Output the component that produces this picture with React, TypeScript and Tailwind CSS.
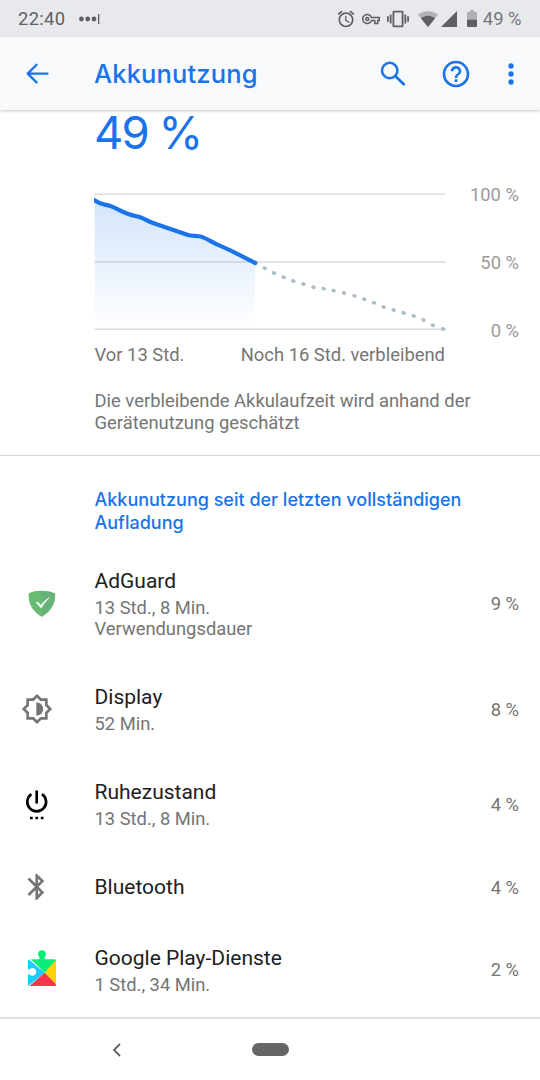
import type { ReactNode } from "react";

const FORECAST: [number, number][] = [
  [264.7, 268.2], [274, 273], [283.7, 277.2], [293.3, 281], [303.5, 284], [313.5, 287.2],
  [323.7, 288.6], [333.7, 290.6], [344, 293], [354.4, 295.9], [364.3, 299.3], [374, 302.9],
  [383.7, 307], [393.7, 310], [403.7, 313], [413.7, 316], [423.5, 320], [432.8, 325.2], [443.2, 329],
];

const CURVE =
  "M94 200 C98 203 101 204 105 204.6 C113 205.5 118 210.5 129 214.3 C134 216 137 216 141 217.5 C145 219 147 221 153 223 L188 235 C191 236 196 235.6 199 236.3 C206 237.5 211 242 218 244.9 C228 248.8 238 254.3 255.3 263";

function StatusBar() {
  return (
    <div className="flex h-[37px] shrink-0 items-center bg-[#e8e9ed] pl-[18px] pr-[18.5px] text-[#5f6063]">
      <span className="w-[61px] text-[18.4px] leading-[37px] tracking-[0.3px]">22:40</span>
      <svg className="h-[12px] w-[22px]" viewBox="0 0 22 12" fill="currentColor">
        <circle cx="2.4" cy="6" r="2.4" />
        <circle cx="8.7" cy="6" r="2.4" />
        <circle cx="15" cy="6" r="2.4" />
        <rect x="19" y="1" width="1.3" height="10" />
      </svg>
      <div className="flex flex-1 items-center justify-end">
        <svg className="mr-[6px] h-[20px] w-[20px]" viewBox="0 0 24 24" fill="currentColor">
          <path d="M22 5.72l-4.6-3.86-1.29 1.53 4.6 3.86L22 5.72zM7.88 3.39L6.6 1.86 2 5.71l1.29 1.53 4.59-3.85zM12.5 8H11v6l4.75 2.85.75-1.23-4-2.37V8zM12 4c-4.97 0-9 4.03-9 9s4.02 9 9 9c4.97 0 9-4.03 9-9s-4.03-9-9-9zm0 16c-3.87 0-7-3.13-7-7s3.13-7 7-7 7 3.13 7 7-3.13 7-7 7z" />
        </svg>
        <svg className="mr-[7px] h-[18px] w-[18px]" viewBox="0 0 24 24" fill="currentColor">
          <path d="M22 19h-6v-4h-2.68c-1.14 2.42-3.6 4-6.32 4-3.86 0-7-3.14-7-7s3.14-7 7-7c2.72 0 5.17 1.58 6.32 4H24v6h-2v4zm-4-2h2v-4h2v-2H11.94l-.23-.67C11.01 8.34 9.11 7 7 7c-2.76 0-5 2.24-5 5s2.24 5 5 5c2.11 0 4.01-1.34 4.71-3.33l.23-.67H18v4zM7 15c-1.65 0-3-1.35-3-3s1.35-3 3-3 3 1.35 3 3-1.35 3-3 3zm0-4c-.55 0-1 .45-1 1s.45 1 1 1 1-.45 1-1-.45-1-1-1z" />
        </svg>
        <svg className="mr-[9px] h-[22px] w-[22px]" viewBox="0 0 24 24" fill="currentColor">
          <path d="M0 15h2V9H0v6zm3 2h2V7H3v10zm19-8v6h2V9h-2zm-3 8h2V7h-2v10zM16.5 3h-9C6.67 3 6 3.67 6 4.5v15c0 .83.67 1.5 1.5 1.5h9c.83 0 1.5-.67 1.5-1.5v-15c0-.83-.67-1.5-1.5-1.5zM16 19H8V5h8v14z" />
        </svg>
        <svg className="mr-[3px] h-[16px] w-[20px]" viewBox="0 0 20 16">
          <path d="M0 3.7C5.5-1 14.5-1 20 3.7L10 16Z" fill="#b0b1b4" />
          <path d="M2.9 7.2c4-3.4 10.2-3.4 14.2 0L10 16Z" fill="#5f6063" />
        </svg>
        <svg className="mr-[10px] h-[16px] w-[16px]" viewBox="0 0 16 16" fill="currentColor">
          <path d="M16 0V16H0Z" />
        </svg>
        <svg className="mr-[6px] h-[17px] w-[10px]" viewBox="0 0 10 17">
          <path d="M0 2.8q0-.8.8-.8H3V0h4v2h2.2q.8 0 .8.8V9.500H0Z" fill="#b0b1b4" />
          <path d="M0 9.500h10v6.700q0 .8-.8.8H.8q-.8 0-.8-.8Z" fill="#5f6063" />
        </svg>
        <span className="text-[18.4px] leading-[37px] text-[#757679]">49 %</span>
      </div>
    </div>
  );
}

function AppBar() {
  return (
    <header className="z-10 flex h-[73px] shrink-0 items-center bg-[#f8f9fb] pl-[21px] text-[#1a73e8] shadow-[0_1px_3px_rgba(0,0,0,0.22)]">
      <svg className="h-[32px] w-[32px]" viewBox="0 0 32 32" fill="none" stroke="currentColor" strokeWidth="2.3" strokeLinecap="round" strokeLinejoin="round">
        <path d="M26.500 15.600H7M15.600 6.800L6.700 15.600l8.900 8.800" />
      </svg>
      <h1 className="ml-[41px] w-[284px] font-['Inter','Roboto',sans-serif] text-[25.500px] font-medium leading-[32px] tracking-[0.15px]">Akkunutzung</h1>
      <svg className="h-[32px] w-[32px]" viewBox="0 0 32 32" fill="none" stroke="currentColor" strokeWidth="2.500" strokeLinecap="round">
        <circle cx="11.700" cy="12.500" r="7.700" />
        <path d="M17.500 18.300L25.800 26.300" strokeWidth="2.700" />
      </svg>
      <svg className="ml-[30px] h-[32px] w-[32px]" viewBox="0 0 24 24" fill="currentColor">
        <path d="M11 18h2v-2h-2v2zm1-16C6.480 2 2 6.480 2 12s4.480 10 10 10 10-4.480 10-10S17.520 2 12 2zm0 18c-4.410 0-8-3.590-8-8s3.590-8 8-8 8 3.590 8 8-3.590 8-8 8zm0-14c-2.210 0-4 1.790-4 4h2c0-1.100.9-2 2-2s2 .9 2 2c0 2-3 1.750-3 5h2c0-2.250 3-2.500 3-5 0-2.210-1.790-4-4-4z" />
      </svg>
      <svg className="ml-[35px] h-[24px] w-[8px]" viewBox="0 0 8 24" fill="currentColor">
        <circle cx="4" cy="4" r="2.700" />
        <circle cx="4" cy="12" r="2.700" />
        <circle cx="4" cy="20" r="2.700" />
      </svg>
    </header>
  );
}

function BatteryChart() {
  return (
    <div className="flex h-[148px] pl-[94px] pr-[21px]">
      <svg className="h-[148px] w-[354px] shrink-0" viewBox="94 188 354 148">
        <defs>
          <linearGradient id="fade" gradientUnits="userSpaceOnUse" x1="0" y1="194" x2="0" y2="329">
            <stop offset="0" stopColor="#1a73e8" stopOpacity="0.2" />
            <stop offset="1" stopColor="#1a73e8" stopOpacity="0" />
          </linearGradient>
        </defs>
        <path d="M94.500 194.300H445.500M94.500 262H445.500M94.500 329.200H445.500" stroke="#dcdcdc" strokeWidth="1.400" />
        <path d="M94.700 200.500C98 203 101 204 105 204.600 C113 205.500 118 210.500 129 214.300 C134 216 137 216 141 217.500 C145 219 147 221 153 223 L188 235 C191 236 196 235.600 199 236.300 C206 237.500 211 242 218 244.900 C228 248.800 238 254.300 255 263V329H94.700Z" fill="url(#fade)" />
        <path d={CURVE} fill="none" stroke="#1a73e8" strokeWidth="4.200" strokeLinecap="round" />
        {FORECAST.map(([x, y]) => (
          <ellipse key={x} cx={x} cy={y} rx="2.300" ry="1.800" fill="#adbdc6" transform={`rotate(20 ${x} ${y})`} />
        ))}
      </svg>
      <div className="-mt-[4.500px] flex h-[157px] flex-1 flex-col justify-between text-right text-[18.400px] leading-[21px] text-[#9b9b9b]">
        <span className="whitespace-nowrap">100 %</span>
        <span className="whitespace-nowrap">50 %</span>
        <span className="whitespace-nowrap">0 %</span>
      </div>
    </div>
  );
}

function Row({ icon, title, lines, percent, height }: { icon: ReactNode; title: string; lines: string[]; percent: string; height: string }) {
  return (
    <li className={`flex items-center pr-[21px] ${height}`}>
      <div className="flex w-[94.500px] shrink-0 pl-[21px]">{icon}</div>
      <div className="flex-1">
        <div className="text-[21px] leading-[27px] text-[#202020]">{title}</div>
        {lines.length > 0 && (
          <div className="pt-[2px] text-[18.350px] leading-[21.500px] text-[#757575]">
            {lines.map((line) => (
              <div key={line}>{line}</div>
            ))}
          </div>
        )}
      </div>
      <span className="text-[18.400px] leading-[22px] text-[#757575]">{percent}</span>
    </li>
  );
}

const shield = (
  <svg className="ml-[7px] h-[28px] w-[28px]" viewBox="0 0 28 28">
    <path d="M14 .8C9.800.8 4.700 1.500.8 3.500c0 4.300-.5 15.200 13.200 23.200C27.700 18.700 27.200 7.800 27.200 3.500 23.300 1.500 18.200.8 14 .8Z" fill="#67b279" />
    <path d="M14 .8C9.800.8 4.700 1.500.8 3.500c0 4.300-.5 15.200 13.200 23.200Z" fill="#68bc71" />
    <path d="M7.900 12.300q1.800-1 5 3Q16.500 10.500 21.200 7.600 16.300 12.600 13.100 18Q10.200 14.500 7.900 12.300Z" fill="white" stroke="white" strokeWidth="0.600" />
  </svg>
);

const brightness = (
  <svg className="mb-[2px] h-[32px] w-[32px] text-[#757575]" viewBox="0 0 24 24" fill="currentColor">
    <path d="M20 15.310L23.310 12 20 8.690V4h-4.690L12 .69 8.690 4H4v4.690L.69 12 4 15.310V20h4.690L12 23.310 15.310 20H20v-4.690zm-2-.83V18h-3.520L12 20.480 9.520 18H6v-3.520L3.520 12 6 9.520V6h3.520L12 3.520 14.480 6H18v3.520L20.480 12 18 14.480z" />
    <path d="M11.500 7.100v9.800c3.100 0 5.100-2 5.100-4.900s-2-4.900-5.100-4.900z" />
  </svg>
);

const power = (
  <svg className="h-[32px] w-[32px]" viewBox="0 0 32 32" fill="none" stroke="black" strokeWidth="2.700">
    <path d="M15.700 1.500V14.500M10.400 5.200a9.400 9.400 0 1 0 10.600 0" />
    <path d="M9 29h2.700M14.400 29h2.700M19.800 29h2.700" />
  </svg>
);

const bluetooth = (
  <svg className="mb-[2px] h-[31.500px] w-[31.500px] text-[#757575]" viewBox="0 0 24 24" fill="currentColor">
    <path d="M17.710 7.710L12 2h-1v7.590L6.410 5 5 6.410 10.590 12 5 17.590 6.410 19 11 14.410V22h1l5.710-5.710-4.300-4.290 4.300-4.290zM13 5.830l1.880 1.880L13 9.590V5.830zm1.880 10.460L13 18.170v-3.760l1.880 1.880z" />
  </svg>
);

const puzzle = (
  <svg className="mb-[4px] ml-[6px] h-[38px] w-[30px]" viewBox="0 0 30 38">
    <defs>
      <clipPath id="piece">
        <path d="M2.300 10.300H12.300V8.100A4 4 0 1 1 17.700 8.100V10.300H27.500Q29 10.300 29 11.800V35.500Q29 37 27.500 37H2.300Q1 37 1 35.500V25.300H2.500A3.800 3.800 0 1 0 2.500 20.500H1V11.800Q1 10.300 2.300 10.300Z" />
      </clipPath>
    </defs>
    <g clipPath="url(#piece)">
      <path d="M0 9V38L17.700 23.700Z" fill="#1ccbff" />
      <path d="M0 9V0H30V11L17.700 23.700L2.600 9Z" fill="#0aed78" />
      <path d="M30 10V38L17.700 23.700Z" fill="#ffd10a" />
      <path d="M0 38H30V36.500L17.700 23.700L2.500 37Z" fill="#f3364c" />
    </g>
  </svg>
);

export default function App() {
  return (
    <div className="flex h-[1080px] w-[540px] flex-col overflow-hidden bg-white font-['Roboto',sans-serif]">
      <StatusBar />
      <AppBar />
      <main className="flex h-[909px] shrink-0 flex-col border-b-2 border-[#dedede]">
        <section className="h-[346px] shrink-0 border-b border-[#d8d8d8]">
          <div className="flex h-[78px] pl-[94px] font-['Inter','Roboto',sans-serif] text-[45.500px] leading-[45px] tracking-[-2px] text-[#1a73e8]">49 %</div>
          <BatteryChart />
          <div className="flex h-[37px] items-center justify-between pl-[94.500px] pr-[95px] text-[18.400px] leading-[21px] text-[#757575]">
            <span>Vor 13 Std.</span>
            <span>Noch 16 Std. verbleibend</span>
          </div>
          <p className="mt-[17px] pl-[94.500px] text-[18.400px] leading-[21.500px] text-[#757575]">
            Die verbleibende Akkulaufzeit wird anhand der
            <br />
            Gerätenutzung geschätzt
          </p>
        </section>
        <h2 className="h-[89px] shrink-0 pl-[94.500px] pt-[32px] font-['Inter','Roboto',sans-serif] text-[18px] font-medium leading-[23px] text-[#1a73e8]">
          Akkunutzung seit der letzten vollständigen
          <br />
          Aufladung
        </h2>
        <ul className="flex flex-col">
          <Row icon={shield} title="AdGuard" lines={["13 Std., 8 Min.", "Verwendungsdauer"]} percent="9 %" height="h-[117px]" />
          <Row icon={brightness} title="Display" lines={["52 Min."]} percent="8 %" height="h-[95px]" />
          <Row icon={power} title="Ruhezustand" lines={["13 Std., 8 Min."]} percent="4 %" height="h-[95px]" />
          <Row icon={bluetooth} title="Bluetooth" lines={[]} percent="4 %" height="h-[71px]" />
          <Row icon={puzzle} title="Google Play-Dienste" lines={["1 Std., 34 Min."]} percent="2 %" height="h-[94px]" />
        </ul>
      </main>
      <nav className="flex flex-1 items-center pl-[110px]">
        <svg className="h-[16px] w-[12px]" viewBox="0 0 12 16" fill="none" stroke="#616161" strokeWidth="1.800">
          <path d="M10 2L4 8l6 6" />
        </svg>
        <span className="ml-[129.500px] h-[13.500px] w-[37px] rounded-full bg-[#666666]" />
      </nav>
    </div>
  );
}
